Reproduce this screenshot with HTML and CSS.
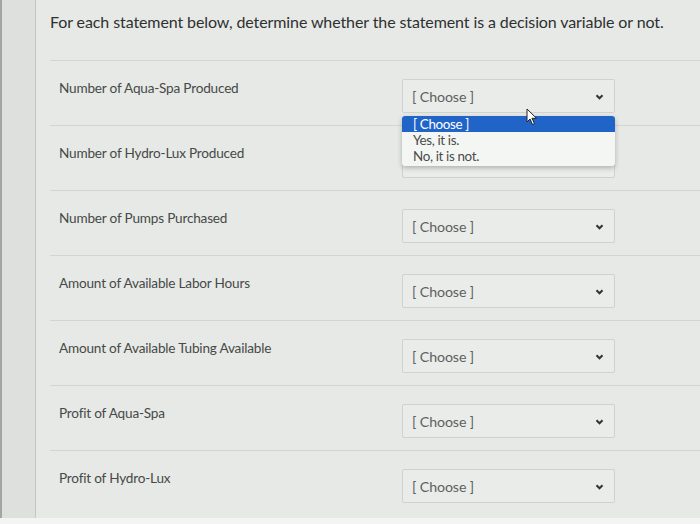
FILE: index.html
```html
<!DOCTYPE html>
<html lang="en">
<head>
    <meta charset="UTF-8">
    <title>Quiz Question</title>
    <link rel="stylesheet" href="styles.css">
</head>
<body>
    <div class="page">
        <div class="gutter"></div>
        <div class="panel">
            <p class="question">For each statement below, determine whether the statement is a decision variable or not.</p>

            <div class="row">
                <div class="label">Number of Aqua-Spa Produced</div>
                <div class="select-wrap">
                    <div class="select">
                        <span>[ Choose ]</span>
                        <svg class="chev" width="9" height="6" viewBox="0 0 9 6"><path d="M1.5 1.2 L4.5 4.3 L7.5 1.2" fill="none" stroke="#333" stroke-width="2"/></svg>
                    </div>
                    <ul class="options">
                        <li class="active">[ Choose ]</li>
                        <li>Yes, it is.</li>
                        <li>No, it is not.</li>
                    </ul>
                    <svg class="cursor" width="12" height="18" viewBox="0 0 12 18"><path d="M1 1 L1 14 L4 11 L6.5 16.5 L8.5 15.6 L6 10.3 L10.5 10.3 Z" fill="#fff" stroke="#222" stroke-width="1"/></svg>
                </div>
            </div>

            <div class="row">
                <div class="label">Number of Hydro-Lux Produced</div>
                <div class="select-wrap">
                    <!-- covered by the open list above -->
                    <div class="select"></div>
                </div>
            </div>

            <div class="row">
                <div class="label">Number of Pumps Purchased</div>
                <div class="select-wrap">
                    <div class="select">
                        <span>[ Choose ]</span>
                        <svg class="chev" width="9" height="6" viewBox="0 0 9 6"><path d="M1.5 1.2 L4.5 4.3 L7.5 1.2" fill="none" stroke="#333" stroke-width="2"/></svg>
                    </div>
                </div>
            </div>

            <div class="row">
                <div class="label">Amount of Available Labor Hours</div>
                <div class="select-wrap">
                    <div class="select">
                        <span>[ Choose ]</span>
                        <svg class="chev" width="9" height="6" viewBox="0 0 9 6"><path d="M1.5 1.2 L4.5 4.3 L7.5 1.2" fill="none" stroke="#333" stroke-width="2"/></svg>
                    </div>
                </div>
            </div>

            <div class="row">
                <div class="label">Amount of Available Tubing Available</div>
                <div class="select-wrap">
                    <div class="select">
                        <span>[ Choose ]</span>
                        <svg class="chev" width="9" height="6" viewBox="0 0 9 6"><path d="M1.5 1.2 L4.5 4.3 L7.5 1.2" fill="none" stroke="#333" stroke-width="2"/></svg>
                    </div>
                </div>
            </div>

            <div class="row">
                <div class="label">Profit of Aqua-Spa</div>
                <div class="select-wrap">
                    <div class="select">
                        <span>[ Choose ]</span>
                        <svg class="chev" width="9" height="6" viewBox="0 0 9 6"><path d="M1.5 1.2 L4.5 4.3 L7.5 1.2" fill="none" stroke="#333" stroke-width="2"/></svg>
                    </div>
                </div>
            </div>

            <div class="row">
                <div class="label">Profit of Hydro-Lux</div>
                <div class="select-wrap">
                    <div class="select">
                        <span>[ Choose ]</span>
                        <svg class="chev" width="9" height="6" viewBox="0 0 9 6"><path d="M1.5 1.2 L4.5 4.3 L7.5 1.2" fill="none" stroke="#333" stroke-width="2"/></svg>
                    </div>
                </div>
            </div>
        </div>
    </div>
    <div class="bottom-strip"></div>
</body>
</html>
```

FILE: styles.css
```css
body {
    margin: 0;
    font-family: Lato, "Open Sans", Arial, sans-serif;
    background-color: #e4e7e4;
    overflow: hidden;
}

.page {
    display: flex;
    height: 518px;
}

.gutter {
    width: 33px;
    background-color: #dde0dd;
    border-right: 1px solid #c3c6c3;
    border-left: 2px solid #a2a5a2;
}

.panel {
    flex: 1;
    background-color: #e6e9e6;
}

.question {
    margin: 0;
    padding: 12px 0 0 14px;
    height: 60px;
    box-sizing: border-box;
    font-size: 16px;
    letter-spacing: -0.1px;
    color: #2f3030;
}

.row {
    display: flex;
    margin-left: 14px;
    padding: 18px 0 12px 0;
    border-top: 1px solid #d2d5d2;
    height: 34px;
}

.label {
    width: 343px;
    padding-left: 9px;
    padding-top: 1px;
    font-size: 13.6px;
    letter-spacing: -0.2px;
    color: #474948;
}

.select-wrap {
    position: relative;
    width: 213px;
}

.select {
    height: 34px;
    box-sizing: border-box;
    border: 1px solid #cfd2cf;
    border-radius: 2px;
    background-color: #e9ece9;
    display: flex;
    align-items: center;
    justify-content: space-between;
    padding: 0 10px 0 9px;
    font-size: 14.2px;
    letter-spacing: -0.1px;
    color: #5e605f;
}

.chev {
    margin-top: 1px;
}

/* open dropdown list over the next row */
.options {
    position: absolute;
    top: 37px;
    left: 0;
    width: 213px;
    margin: 0;
    padding: 0 0 2px 0;
    list-style: none;
    background-color: #f4f6f4;
    border-radius: 3px;
    box-shadow: 0 2px 5px rgba(0, 0, 0, 0.25);
    z-index: 2;
}

.options li {
    height: 16px;
    line-height: 16px;
    padding-left: 11px;
    font-size: 13.4px;
    letter-spacing: -0.35px;
    color: #4a4c4b;
}

.options li.active {
    background-color: #2064c8;
    color: #fff;
    border-radius: 3px 3px 0 0;
}

.cursor {
    position: absolute;
    left: 124px;
    top: 29px;
    z-index: 3;
}

.bottom-strip {
    height: 6px;
    background-color: #f3f4f3;
}
```
